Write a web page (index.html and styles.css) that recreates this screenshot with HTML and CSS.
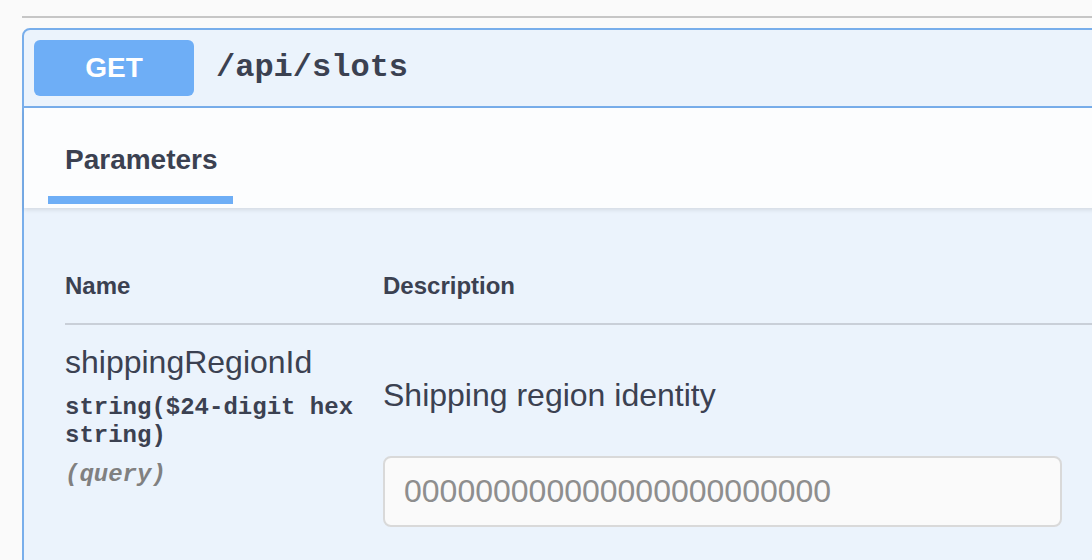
FILE: index.html
```
<!DOCTYPE html>
<html lang="en">
<head>
<meta charset="utf-8">
<title>/api/slots</title>
<link rel="stylesheet" href="styles.css">
</head>
<body>
<div class="page">
  <div class="rule"></div>
  <div class="opblock">
    <div class="summary">
      <span class="method">GET</span>
      <span class="path">/api/slots</span>
    </div>
    <div class="section-header">
      <div class="tab"><h4 class="tab-title">Parameters</h4></div>
    </div>
    <div class="params">
      <div class="params-head">
        <div class="col-name">Name</div>
        <div class="col-desc">Description</div>
      </div>
      <div class="param-row">
        <div class="col-name">
          <div class="param-name">shippingRegionId</div>
          <div class="param-type">string($24-digit hex string)</div>
          <div class="param-in">(query)</div>
        </div>
        <div class="col-desc">
          <p class="param-desc">Shipping region identity</p>
          <input class="param-input" type="text" placeholder="000000000000000000000000">
        </div>
      </div>
    </div>
  </div>
</div>
</body>
</html>
```
FILE: styles.css
```
html, body {
  margin: 0;
  padding: 0;
}
html {
  height: 560px;
  overflow: hidden;
}
body {
  height: 560px;
  background: #fafafa;
  overflow: hidden;
  font-family: "Liberation Sans", Arial, sans-serif;
  color: #3b4151;
}
.page {
  padding: 16px 0 0 22px;
}
.rule {
  height: 2px;
  background: #c6c6c6;
}
.opblock {
  margin-top: 10px;
  margin-right: -40px;
  border: 2px solid #78aeeb;
  border-radius: 8px;
  background: #ebf3fc;
}
.summary {
  display: flex;
  align-items: center;
  padding: 10px;
  border-bottom: 2px solid #78aeeb;
}
.method {
  width: 160px;
  height: 56px;
  line-height: 56px;
  text-align: center;
  border-radius: 6px;
  background: #6eaef6;
  color: #ffffff;
  font-weight: 700;
  font-size: 28px;
}
.path {
  margin-left: 22px;
  font-family: "Liberation Mono", "Courier New", monospace;
  font-weight: 700;
  font-size: 32px;
  line-height: 36px;
  color: #3b4151;
}
.section-header {
  height: 100px;
  padding: 0 24px;
  display: flex;
  align-items: flex-end;
  background: #fcfdfe;
  box-shadow: 0 2px 4px rgba(0, 0, 0, 0.1);
  position: relative;
}
.tab {
  width: 185px;
  margin-bottom: 4px;
}
.tab::after {
  content: "";
  display: block;
  height: 8px;
  margin-top: 20px;
  background: #6eaef6;
}
.tab-title {
  margin: 0;
  padding-left: 17px;
  font-size: 28px;
  line-height: 32px;
  font-weight: 700;
}
.params {
  padding: 64px 0 48px 41px;
}
.params-head,
.param-row {
  display: grid;
  grid-template-columns: 318px 1fr;
}
.params-head {
  font-size: 24px;
  line-height: 28px;
  font-weight: 700;
  padding-bottom: 23px;
  border-bottom: 2px solid #c9cfd8;
}
.param-row {
  padding-top: 19px;
}
.param-name {
  font-size: 32px;
  line-height: 36px;
}
.param-type {
  margin-top: 14px;
  font-family: "Liberation Mono", "Courier New", monospace;
  font-weight: 700;
  font-size: 24px;
  line-height: 28px;
}
.param-in {
  margin-top: 11px;
  font-family: "Liberation Mono", "Courier New", monospace;
  font-weight: 700;
  font-style: italic;
  font-size: 24px;
  line-height: 28px;
  color: #808080;
}
.param-desc {
  margin: 33px 0 0 0;
  font-size: 32px;
  line-height: 36px;
}
.param-input {
  display: block;
  box-sizing: border-box;
  margin-top: 43px;
  width: 679px;
  height: 71px;
  padding: 0 19px;
  border: 2px solid #d9d9d9;
  border-radius: 8px;
  background: #fafafa;
  font-family: "Liberation Sans", Arial, sans-serif;
  font-size: 32px;
  color: #3b4151;
  outline: none;
}
.param-input::placeholder {
  color: #8e8e8e;
}
```
